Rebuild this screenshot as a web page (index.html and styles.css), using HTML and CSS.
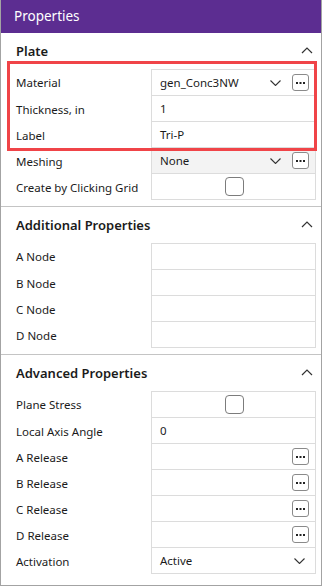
FILE: index.html
```html
<!DOCTYPE html>
<html lang="en">
<head>
  <meta charset="UTF-8">
  <meta name="viewport" content="width=device-width, initial-scale=1.0">
  <title>Properties</title>
  <link rel="stylesheet" href="styles.css">
</head>
<body>
  <div class="panel">
    <div class="titlebar">Properties</div>

    <!-- Plate -->
    <section class="section">
      <div class="section-head">
        <span>Plate</span>
        <svg class="collapse" width="12" height="7" viewBox="0 0 12 7"><polyline points="1,6 6,1 11,6" fill="none" stroke="#333" stroke-width="1.2"/></svg>
      </div>
      <div class="rows">
        <div class="label">Material</div>
        <div class="value first">
          <span class="text">gen_Conc3NW</span>
          <svg class="chev" width="11" height="6" viewBox="0 0 11 6"><polyline points="0.5,0.5 5.5,5.5 10.5,0.5" fill="none" stroke="#333" stroke-width="1.1"/></svg>
          <svg class="dots" width="17" height="17" viewBox="0 0 17 17"><rect x="0.5" y="0.5" width="16" height="16" rx="2.5" fill="#fff" stroke="#8a8a8a"/><rect x="4" y="8" width="2" height="2" fill="#222"/><rect x="7.5" y="8" width="2" height="2" fill="#222"/><rect x="11" y="8" width="2" height="2" fill="#222"/></svg>
        </div>
        <div class="label">Thickness, in</div>
        <div class="value"><span class="text">1</span></div>
        <div class="label">Label</div>
        <div class="value"><span class="text">Tri-P</span></div>
        <div class="label">Meshing</div>
        <div class="value disabled">
          <span class="text">None</span>
          <svg class="chev" width="11" height="6" viewBox="0 0 11 6"><polyline points="0.5,0.5 5.5,5.5 10.5,0.5" fill="none" stroke="#333" stroke-width="1.1"/></svg>
          <svg class="dots" width="17" height="17" viewBox="0 0 17 17"><rect x="0.5" y="0.5" width="16" height="16" rx="2.5" fill="#fff" stroke="#8a8a8a"/><rect x="4" y="8" width="2" height="2" fill="#222"/><rect x="7.5" y="8" width="2" height="2" fill="#222"/><rect x="11" y="8" width="2" height="2" fill="#222"/></svg>
        </div>
        <div class="label">Create by Clicking Grid</div>
        <div class="value center"><span class="check"></span></div>
      </div>
    </section>

    <!-- Additional Properties -->
    <section class="section">
      <div class="section-head">
        <span>Additional Properties</span>
        <svg class="collapse" width="12" height="7" viewBox="0 0 12 7"><polyline points="1,6 6,1 11,6" fill="none" stroke="#333" stroke-width="1.2"/></svg>
      </div>
      <div class="rows">
        <div class="label">A Node</div>
        <div class="value first"></div>
        <div class="label">B Node</div>
        <div class="value"></div>
        <div class="label">C Node</div>
        <div class="value"></div>
        <div class="label">D Node</div>
        <div class="value"></div>
      </div>
    </section>

    <!-- Advanced Properties -->
    <section class="section last">
      <div class="section-head">
        <span>Advanced Properties</span>
        <svg class="collapse" width="12" height="7" viewBox="0 0 12 7"><polyline points="1,6 6,1 11,6" fill="none" stroke="#333" stroke-width="1.2"/></svg>
      </div>
      <div class="rows">
        <div class="label">Plane Stress</div>
        <div class="value first center"><span class="check"></span></div>
        <div class="label">Local Axis Angle</div>
        <div class="value"><span class="text">0</span></div>
        <div class="label">A Release</div>
        <div class="value"><span class="text"></span><svg class="dots" width="17" height="17" viewBox="0 0 17 17"><rect x="0.5" y="0.5" width="16" height="16" rx="2.5" fill="#fff" stroke="#8a8a8a"/><rect x="4" y="8" width="2" height="2" fill="#222"/><rect x="7.5" y="8" width="2" height="2" fill="#222"/><rect x="11" y="8" width="2" height="2" fill="#222"/></svg></div>
        <div class="label">B Release</div>
        <div class="value"><span class="text"></span><svg class="dots" width="17" height="17" viewBox="0 0 17 17"><rect x="0.5" y="0.5" width="16" height="16" rx="2.5" fill="#fff" stroke="#8a8a8a"/><rect x="4" y="8" width="2" height="2" fill="#222"/><rect x="7.5" y="8" width="2" height="2" fill="#222"/><rect x="11" y="8" width="2" height="2" fill="#222"/></svg></div>
        <div class="label">C Release</div>
        <div class="value"><span class="text"></span><svg class="dots" width="17" height="17" viewBox="0 0 17 17"><rect x="0.5" y="0.5" width="16" height="16" rx="2.5" fill="#fff" stroke="#8a8a8a"/><rect x="4" y="8" width="2" height="2" fill="#222"/><rect x="7.5" y="8" width="2" height="2" fill="#222"/><rect x="11" y="8" width="2" height="2" fill="#222"/></svg></div>
        <div class="label">D Release</div>
        <div class="value"><span class="text"></span><svg class="dots" width="17" height="17" viewBox="0 0 17 17"><rect x="0.5" y="0.5" width="16" height="16" rx="2.5" fill="#fff" stroke="#8a8a8a"/><rect x="4" y="8" width="2" height="2" fill="#222"/><rect x="7.5" y="8" width="2" height="2" fill="#222"/><rect x="11" y="8" width="2" height="2" fill="#222"/></svg></div>
        <div class="label">Activation</div>
        <div class="value">
          <span class="text">Active</span>
          <svg class="chev solo" width="11" height="6" viewBox="0 0 11 6"><polyline points="0.5,0.5 5.5,5.5 10.5,0.5" fill="none" stroke="#333" stroke-width="1.1"/></svg>
        </div>
      </div>
    </section>

    <!-- highlight around the first three rows -->
    <div class="highlight"></div>
  </div>
</body>
</html>
```

FILE: styles.css
```css
body {
  margin: 0;
  font-family: "Noto Sans", sans-serif;
  color: #1b1b1b;
  background: #fff;
}
.panel {
  position: relative;
  width: 322px;
  height: 586px;
  box-sizing: border-box;
  border: 1px solid #a3a3a3;
  border-top: none;
  overflow: hidden;
}
.titlebar {
  height: 33px;
  margin: 0 -1px;
  padding-left: 14px;
  background-color: #5c2d91;
  color: #fff;
  font-size: 13.5px;
  line-height: 32px;
}
.section {
  padding-bottom: 6px;
  border-bottom: 1px solid #c4c4c4;
}
.section.last {
  border-bottom: none;
}
.section-head {
  height: 36px;
  display: flex;
  align-items: center;
  justify-content: space-between;
  padding: 0 8px 0 15px;
  font-size: 13px;
  font-weight: 600;
}
.collapse {
  margin-top: -2px;
}
.rows {
  display: grid;
  grid-template-columns: 135px 1fr;
  margin: 0 5px 0 15px;
  font-size: 11.5px;
}
.label {
  height: 26px;
  display: flex;
  align-items: center;
}
.label:first-child {
  height: 27px;
}
.value {
  height: 26px;
  box-sizing: border-box;
  display: flex;
  align-items: center;
  padding: 0 6px 0 8px;
  border: 1px solid #dcdcdc;
  border-top: none;
}
.value.first {
  height: 27px;
  border-top: 1px solid #dcdcdc;
}
.value.disabled {
  background-color: #f3f3f3;
}
.value.center {
  justify-content: center;
  padding-left: 8px;
}
.text {
  flex: 1;
}
.chev {
  margin-right: 11px;
}
.chev.solo {
  margin-right: 4px;
}
.dots {
  display: block;
}
.check {
  width: 17px;
  height: 17px;
  border: 1px solid #7c7c7c;
  border-radius: 4px;
  background: #fff;
}
.highlight {
  position: absolute;
  left: 6px;
  top: 61px;
  width: 304px;
  height: 84px;
  border: 3px solid #f04448;
}
```
